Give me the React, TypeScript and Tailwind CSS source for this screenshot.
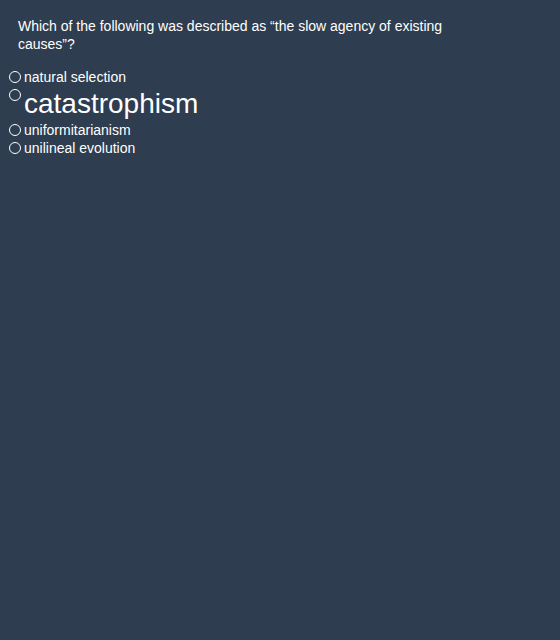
const options = [
  { id: "a", label: "natural selection", big: false },
  { id: "b", label: "catastrophism", big: true },
  { id: "c", label: "uniformitarianism", big: false },
  { id: "d", label: "unilineal evolution", big: false },
];

export default function App() {
  return (
    <div className="min-h-[640px] w-[560px] bg-[#2e3d4f] text-white font-['Liberation_Sans',Arial,sans-serif]">
      <p className="w-[450px] pl-[18px] pt-[17px] text-[14px] leading-[18px]">
        Which of the following was described as “the slow agency of existing causes”?
      </p>
      <ul className="mt-[15px] pl-[9px]">
        {options.map((opt) => (
          <li key={opt.id} className="flex items-start">
            <span className="mt-[3px] mr-[3px] h-[12px] w-[12px] shrink-0 rounded-full border border-white" />
            <span
              className={
                opt.big
                  ? "text-[28px] leading-[35px]"
                  : "text-[14px] leading-[18px]"
              }
            >
              {opt.label}
            </span>
          </li>
        ))}
      </ul>
    </div>
  );
}
